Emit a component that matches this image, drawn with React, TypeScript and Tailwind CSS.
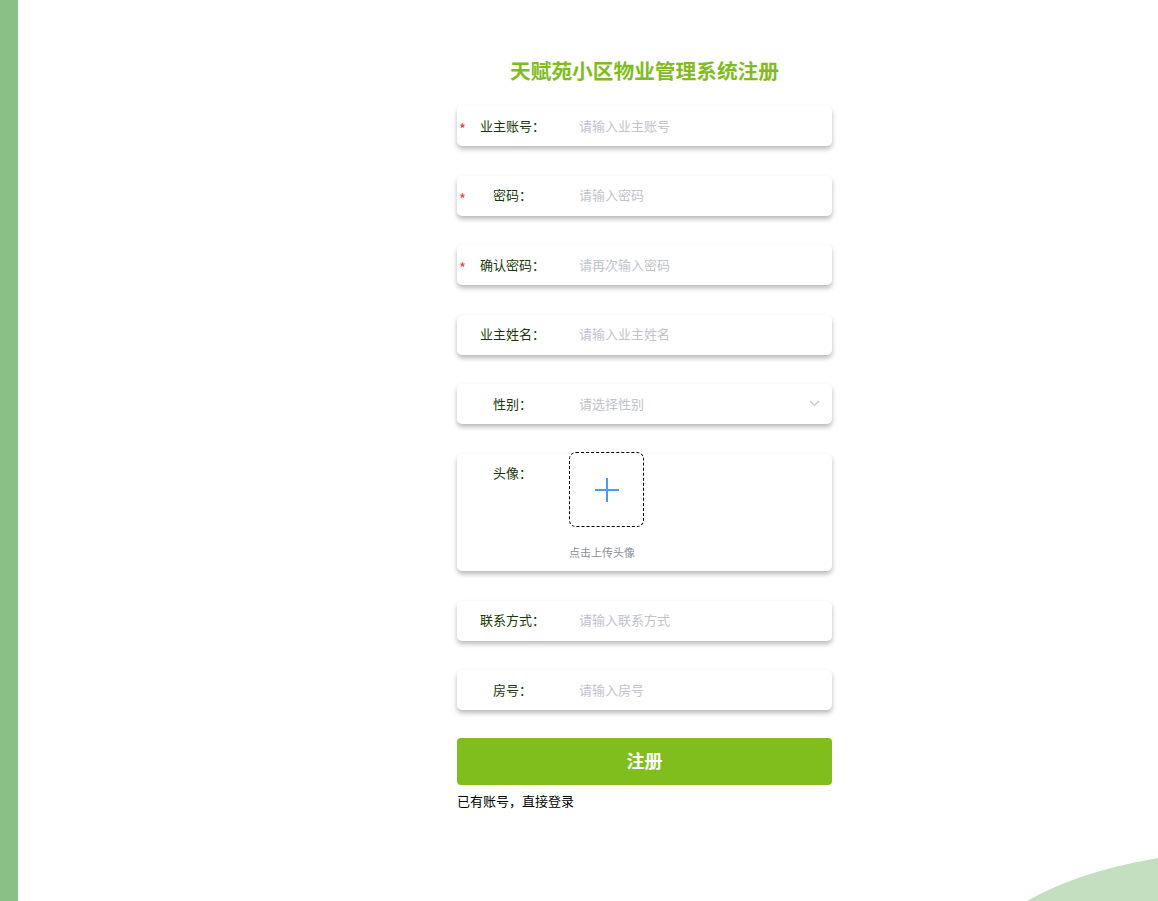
import React from "react";

const font = { fontFamily: '"Noto Sans CJK SC", "Noto Sans", sans-serif' };

function Row({ label, placeholder, required, select }: { label: string; placeholder: string; required?: boolean; select?: boolean }) {
  return (
    <div className="relative flex h-[40px] items-center rounded-[5px] bg-white pb-[1px] shadow-[0_3px_5px_rgba(0,0,0,0.28)]">
      {required && <span className="absolute left-[2px] top-[15px] text-[15px] leading-[15px] text-[#f23c3c]">*</span>}
      <div className="w-[111px] text-center text-[13px] leading-[18px] text-[#1a380a]">{label}：</div>
      <div className="flex flex-1 items-center pl-[11px] pr-[12px]">
        <span className="flex-1 text-[13px] leading-[18px] text-[#c0c4cc]">{placeholder}</span>
        {select && (
          <svg width="11" height="7" viewBox="0 0 11 7" fill="none">
            <path d="M1 1l4.5 4.5L10 1" stroke="#c0c4cc" strokeWidth="1.2" />
          </svg>
        )}
      </div>
    </div>
  );
}

export default function App() {
  return (
    <div className="flex h-[901px] w-full overflow-hidden bg-white" style={font}>
      <div className="w-[18px] shrink-0 bg-[#88c085]" />
      <div className="relative flex-1">
        <div className="ml-[439px] flex w-[375px] flex-col pt-[56px]">
          <h1 className="text-center text-[20.7px] font-bold leading-[28px] text-[#7fbd1c]">天赋苑小区物业管理系统注册</h1>
          <div className="mt-[22px] flex flex-col gap-[29.5px]">
            <Row label="业主账号" placeholder="请输入业主账号" required />
            <Row label="密码" placeholder="请输入密码" required />
            <Row label="确认密码" placeholder="请再次输入密码" required />
            <Row label="业主姓名" placeholder="请输入业主姓名" />
            <Row label="性别" placeholder="请选择性别" select />
            <div className="flex rounded-[5px] bg-white pb-[11px] shadow-[0_3px_5px_rgba(0,0,0,0.28)]">
              <div className="w-[111px] pt-[10px] text-center text-[13px] leading-[18px] text-[#1a380a]">头像：</div>
              <div className="flex flex-col pl-[1px]">
                <div className="-mt-[1.5px] flex h-[75px] w-[75px] items-center justify-center rounded-[7px] border border-dashed border-black">
                  <svg width="26" height="26" viewBox="0 0 26 26">
                    <path d="M13 1v24M1 13h24" stroke="#409eff" strokeWidth="2" />
                  </svg>
                </div>
                <div className="mt-[17px] text-[11px] leading-[16px] text-[#8a8f99]">点击上传头像</div>
              </div>
            </div>
            <Row label="联系方式" placeholder="请输入联系方式" />
            <Row label="房号" placeholder="请输入房号" />
          </div>
          <button className="mt-[28px] h-[47px] w-full rounded-[4px] bg-[#80be1e] pb-[2px] text-[18px] font-bold text-white">注册</button>
          <div className="mt-[7px] text-[13px] leading-[18px] text-black">已有账号，直接登录</div>
        </div>
        <svg className="absolute bottom-0 right-0" width="131" height="43" viewBox="0 0 131 43">
          <path d="M0 43 Q 50 14 131 0 L131 43 Z" fill="#c3dfc0" />
        </svg>
      </div>
    </div>
  );
}
